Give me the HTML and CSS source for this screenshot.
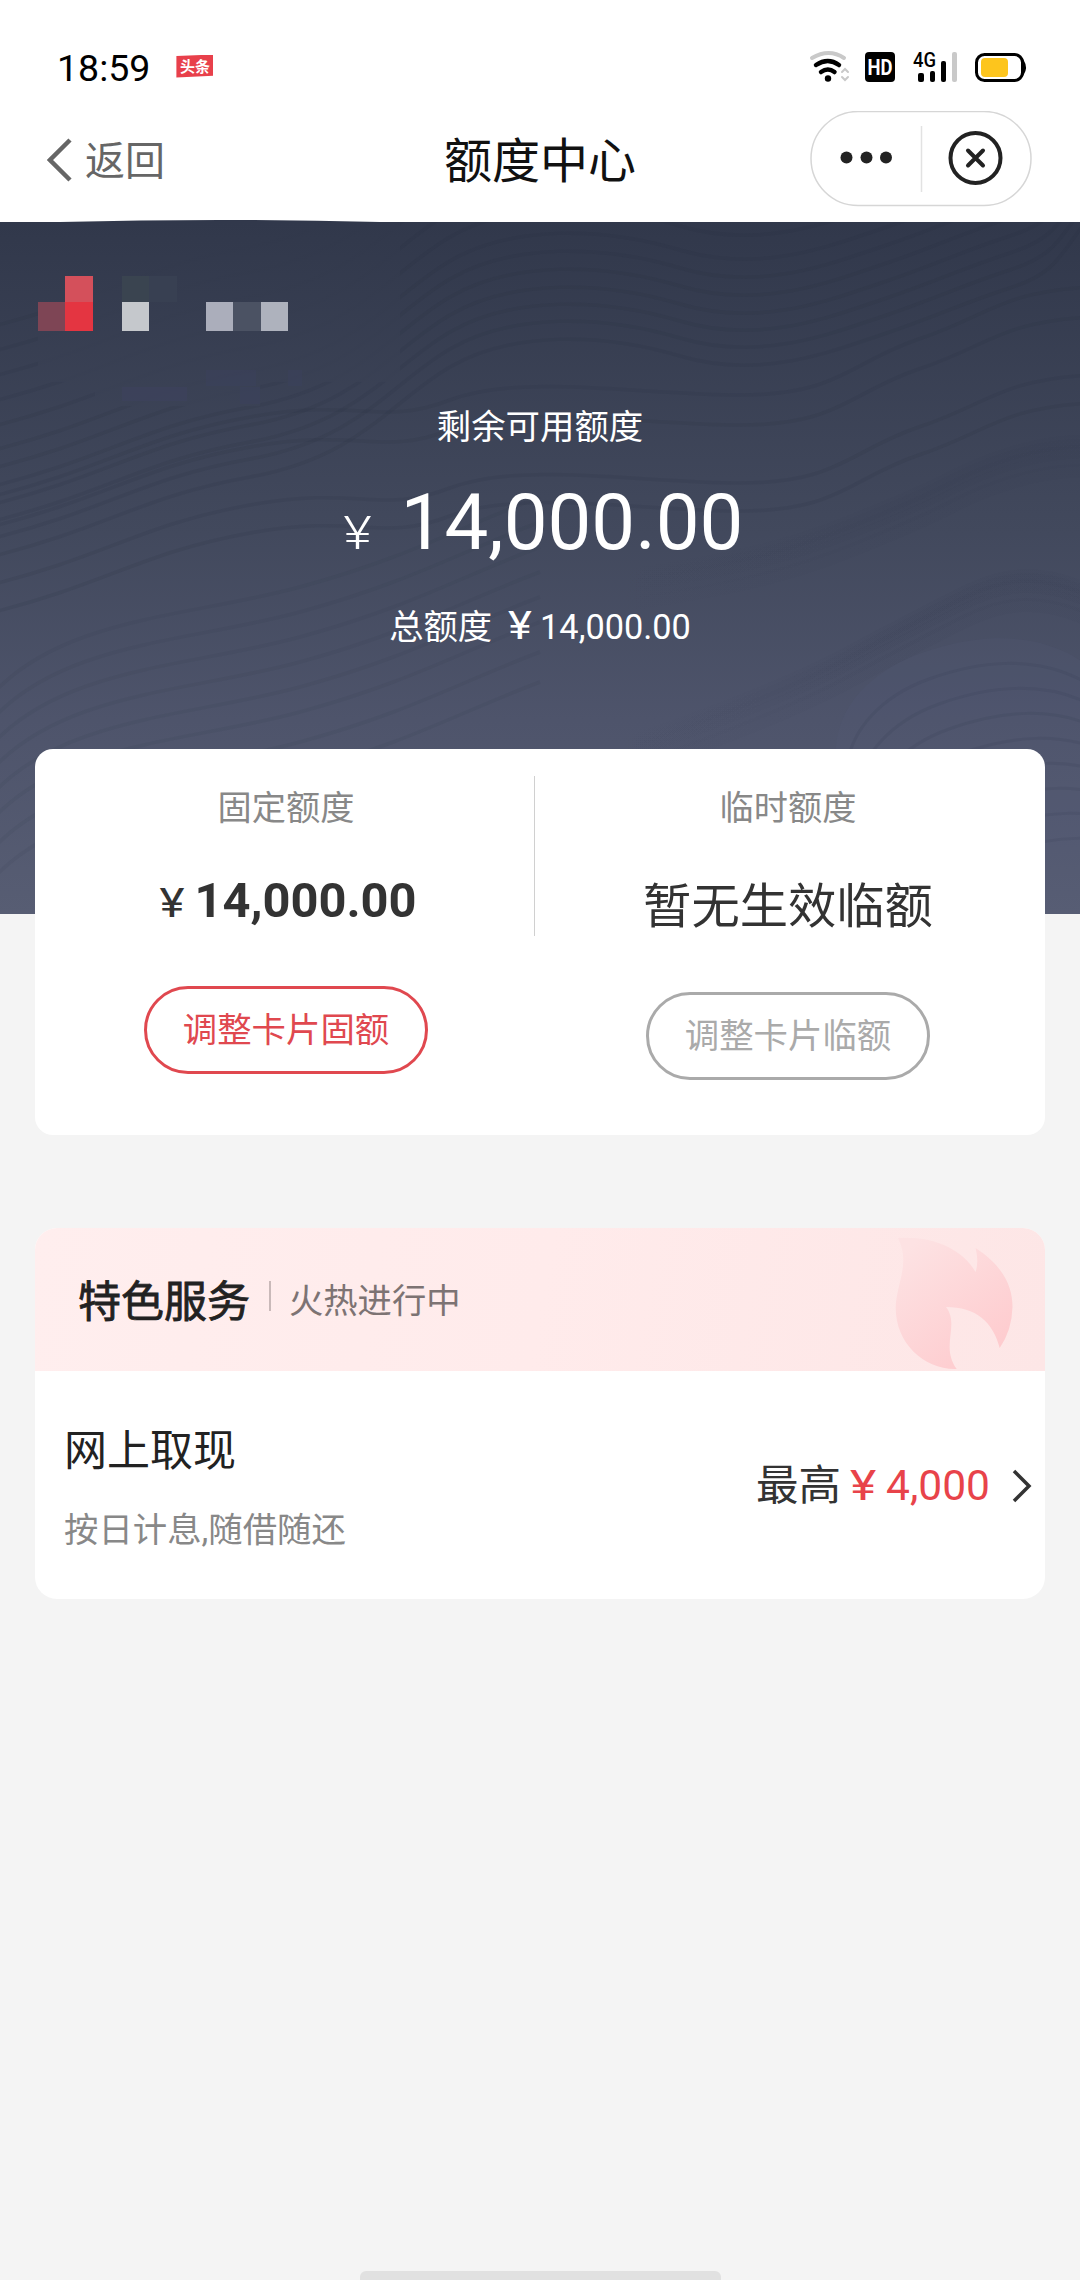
FILE: index.html
```html
<!DOCTYPE html>
<html lang="zh-CN">
<head>
<meta charset="utf-8">
<title>额度中心</title>
<link rel="stylesheet" href="styles.css">
</head>
<body>
<header class="top">
  <div class="status">
    <span class="time">18:59</span>
    <span class="news">头条</span>
    <svg class="status-icons" width="218" height="32" viewBox="810 50 218 32">
      <g fill="none" stroke-linecap="round">
        <path d="M812 57Q829 47 844 57" stroke="#c9c9c9" stroke-width="4"/>
        <path d="M816 64Q828 56 839 64" stroke="#000" stroke-width="4.500"/>
        <path d="M821 71Q828 66 834.500 71" stroke="#000" stroke-width="4.500"/>
        <path d="M842 71l3-3 3 3M842 76l3 3 3-3" stroke="#c9c9c9" stroke-width="2"/>
      </g>
      <circle cx="828" cy="77.500" r="3.200"/>
      <rect x="865" y="51" width="30" height="30" rx="4"/>
      <text x="880" y="74" text-anchor="middle" class="hd" textLength="25" lengthAdjust="spacingAndGlyphs">HD</text>
      <text x="913" y="66" class="net" textLength="23" lengthAdjust="spacingAndGlyphs">4G</text>
      <rect x="918" y="72" width="6" height="9" rx="2"/>
      <rect x="930" y="70" width="5" height="11" rx="2"/>
      <rect x="941" y="60" width="5" height="21" rx="2"/>
      <rect x="952" y="51" width="5" height="30" rx="2" fill="#c9c9c9"/>
      <rect x="976.500" y="53.500" width="46" height="26" rx="8" fill="#fff" stroke="#000" stroke-width="3"/>
      <path d="M1023 60q4 6.500 0 13z" stroke="#000" stroke-width="2"/>
      <rect x="981" y="57" width="27" height="19" rx="4" fill="#fdc51d"/>
    </svg>
  </div>
  <nav class="nav">
    <div class="back">
      <svg width="26" height="44" viewBox="0 0 26 44"><path d="M23 2L3 22l20 20" fill="none" stroke="#666" stroke-width="4.500"/></svg>
      <span>返回</span>
    </div>
    <h1 class="title">额度中心</h1>
    <div class="capsule">
      <svg width="222" height="96" viewBox="810 111 222 96">
        <rect x="811" y="111.500" width="220" height="94" rx="47" fill="#fff" stroke="#d6d6d6" stroke-width="1.500"/>
        <path d="M921.500 126v66" stroke="#e2e2e2" stroke-width="1.500"/>
        <g fill="#222"><circle cx="846.500" cy="157.500" r="6"/><circle cx="866.500" cy="157.500" r="6"/><circle cx="886" cy="157.500" r="6"/></g>
        <circle cx="975.500" cy="158" r="25" fill="none" stroke="#222" stroke-width="4"/>
        <path d="M968 150.500l15 15m0-15l-15 15" stroke="#222" stroke-width="4" stroke-linecap="round"/>
      </svg>
    </div>
  </nav>
</header>

<section class="hero">
  <svg class="waves" width="1080" height="694" viewBox="0 -2 1080 694">
    <defs>
      <linearGradient id="bg" gradientUnits="userSpaceOnUse" x1="0" y1="0" x2="0" y2="692"><stop offset="0" stop-color="#31384b"/><stop offset=".45" stop-color="#42495d"/><stop offset=".72" stop-color="#4e546b"/><stop offset="1" stop-color="#575d73"/></linearGradient>
      <linearGradient id="fade" gradientUnits="userSpaceOnUse" x1="600" y1="0" x2="900" y2="0"><stop offset="0" stop-color="#2c3248" stop-opacity="0"/><stop offset="1" stop-color="#2c3248"/></linearGradient>
      <clipPath id="box"><rect width="1080" height="692"/></clipPath>
      <path id="w" d="M-10 335C110 305 140 275 250 255S390 180 450 145S600 110 680 134S830 130 884 112S960 82 1010 66S1060 30 1090 -5"/>
      <path id="u" d="M-10 335C110 305 140 275 250 255S380 265 450 238S640 233 740 233S850 200 919 177S1000 130 1090 125"/>
      <path id="v" d="M-10 600C60 520 190 520 300 490S460 430 540 400"/>
      <path id="r" d="M836 540C832 480 880 446 919 432S1030 400 1090 445"/>
      <path id="s1" d="M600 350C740 332 800 313 850 293S930 260 953 248S1035 210 1090 213"/>
      <path id="s2" d="M560 538C660 503 720 482 781 456S860 417 884 405S940 375 970 361S1035 338 1090 362"/>
    </defs>
    <path d="M0 0h60Q220-4 380 0h700v692H0z" fill="url(#bg)"/>
    <g clip-path="url(#box)" fill="none">
      <g stroke="url(#fade)" stroke-opacity=".055" stroke-width="14">
        <use href="#s1" y="7"/><use href="#s1" y="11"/><use href="#s1" y="17"/><use href="#s1" y="25"/><use href="#s1" y="36"/>
        <use href="#s2" y="7"/><use href="#s2" y="11"/><use href="#s2" y="17"/><use href="#s2" y="25"/><use href="#s2" y="36"/>
      </g>
      <g stroke="#262d40" stroke-opacity=".13" stroke-width="3.500">
        <use href="#w" y="-230"/><use href="#w" y="-205"/><use href="#w" y="-180"/><use href="#w" y="-155"/><use href="#w" y="-130"/><use href="#w" y="-106"/><use href="#w" y="-88"/><use href="#w" y="-70"/><use href="#w" y="-52"/><use href="#w" y="-35"/><use href="#w" y="-18"/><use href="#w"/>
        <use href="#u" y="-60"/><use href="#u" y="-30"/><use href="#u" y="28"/><use href="#u" y="56"/>
      </g>
      <g stroke="#262d40" stroke-opacity=".08" stroke-width="3.500">
        <use href="#v" y="-125"/><use href="#v" y="-100"/><use href="#v" y="-75"/><use href="#v" y="-50"/><use href="#v" y="-25"/><use href="#v"/><use href="#v" y="30"/><use href="#v" y="60"/>
      </g>
      <path d="M836 692V540C832 480 880 446 919 432S1030 400 1090 445V692z" fill="#565e7a" fill-opacity=".16"/>
      <g stroke="#30374b" stroke-opacity=".13" stroke-width="3">
        <use href="#r" x="10" y="25"/><use href="#r" x="20" y="50"/><use href="#r" x="30" y="75"/><use href="#r" x="40" y="100"/><use href="#r" x="50" y="125"/><use href="#r" x="60" y="150"/><use href="#r" x="70" y="175"/><use href="#r" x="80" y="200"/>
      </g>
      <path d="M38 0h362v160H260v24H95v-24H38z" fill="url(#bg)" fill-opacity=".85"/>
    </g>
  </svg>
  <svg class="user" width="380" height="128" viewBox="38 276 380 128">
    <rect x="122" y="276" width="27" height="26" fill="#3a4450"/><rect x="149" y="276" width="28" height="26" fill="#384052"/>
    <rect x="65" y="276" width="28" height="26" fill="#d4505b"/>
    <rect x="38" y="302" width="27" height="29" fill="#7e4555"/><rect x="65" y="302" width="28" height="29" fill="#e43541"/>
    <rect x="122" y="302" width="27" height="29" fill="#c5c8cc"/>
    <rect x="206" y="302" width="27" height="29" fill="#abaebb"/><rect x="233" y="302" width="28" height="29" fill="#4b5263"/><rect x="261" y="302" width="27" height="29" fill="#aeb2bd"/>
    <g fill="#3d4160"><rect x="206" y="370" width="50" height="16" opacity=".4"/><rect x="122" y="387" width="65" height="14" opacity=".5"/><rect x="240" y="387" width="20" height="17" opacity=".4"/><rect x="288" y="370" width="14" height="16" opacity=".4"/></g>
  </svg>
  <div class="hero-label">剩余可用额度</div>
  <div class="hero-amount"><span class="yen">¥</span><span class="num">14,000.00</span></div>
  <div class="hero-total"><span>总额度</span><span class="yen">¥</span><span class="num">14,000.00</span></div>
</section>

<section class="limits">
  <div class="limit fixed">
    <div class="limit-name">固定额度</div>
    <div class="limit-value"><span class="yen">¥</span><b>14,000.00</b></div>
    <button class="btn">调整卡片固额</button>
  </div>
  <i class="divider"></i>
  <div class="limit temp">
    <div class="limit-name">临时额度</div>
    <div class="limit-value none">暂无生效临额</div>
    <button class="btn off">调整卡片临额</button>
  </div>
</section>

<section class="services">
  <div class="services-head">
    <h2>特色服务</h2><i></i><span>火热进行中</span>
    <svg width="130" height="143" viewBox="890 1228 130 143">
      <defs><linearGradient id="fl" x1="0" y1="0" x2=".7" y2="1"><stop offset=".1" stop-color="#fde2e3"/><stop offset="1" stop-color="#fecbce"/></linearGradient></defs>
      <path d="M898 1238C934 1236 962 1249 975.600 1272Q979 1262 975.600 1248C1003 1266 1012.500 1286 1012.500 1307Q1012 1330 999.700 1348C993 1322 976 1307 946 1307C960 1325 940 1346 956.700 1369C924 1370 895.700 1343 895.700 1308C896 1284 911 1264 898 1238z" fill="url(#fl)"/>
    </svg>
  </div>
  <div class="service">
    <div class="service-text">
      <div class="service-name">网上取现</div>
      <div class="service-desc">按日计息,随借随还</div>
    </div>
    <div class="service-max"><span>最高</span><span class="yen">¥</span><span class="num">4,000</span>
      <svg width="20" height="34" viewBox="0 0 20 34"><path d="M2 2l15 15L2 32" fill="none" stroke="#333" stroke-width="3.500"/></svg>
    </div>
  </div>
</section>
<footer class="home"><i></i></footer>
</body>
</html>
```
FILE: styles.css
```css
* { box-sizing: border-box; margin: 0; padding: 0; }
body {
  width: 1080px;
  height: 2280px;
  display: flex;
  flex-direction: column;
  background: #f4f4f4;
  font-family: Roboto, "Noto Sans CJK SC", sans-serif;
  color: #333;
  overflow: hidden;
}
svg { display: block; flex: none; }
.yen { font-family: Roboto, sans-serif; text-align: center; transform: scaleX(1.16); }
.news { font-family: "Noto Sans CJK SC", sans-serif; }

.top { height: 222px; background: #fff; flex: none; }
.status { height: 100px; padding: 34px 52px 0 57px; display: flex; align-items: center; }
.time { font-size: 37.500px; line-height: 66px; color: #000; padding-top: 1px; }
.news {
  width: 37px; height: 23px; margin-left: 26px; margin-bottom: 2px;
  background: #e8404b; color: #fff;
  font-size: 15px; font-weight: 700; line-height: 21px; text-align: center;
  clip-path: polygon(0 6%, 100% 0, 100% 92%, 0 100%);
}
.status-icons { margin-left: auto; overflow: visible; }
.hd { fill: #fff; font: 700 22px Roboto, sans-serif; }
.net { fill: #000; font: 500 20px Roboto, sans-serif; }
.nav { height: 120px; display: grid; grid-template-columns: 1fr auto 1fr; align-items: center; padding: 0 48px; }
.back { display: flex; align-items: center; gap: 12px; font-size: 40px; line-height: 60px; color: #666; }
.back svg { margin-left: -1px; }
.back span, .title { padding-top: 3px; }
.title { font-size: 48px; font-weight: 400; line-height: 60px; color: #111; }
.capsule { justify-self: end; padding-bottom: 3px; }

.hero { position: relative; height: 692px; flex: none; padding-top: 54px; display: flex; flex-direction: column; align-items: center; color: #fff; }
.hero > * { position: relative; }
.hero > .waves { position: absolute; left: 0; top: -2px; }
.user { align-self: flex-start; margin-left: 38px; }
.hero-label { margin-top: 3px; font-size: 34.4px; line-height: 40px; }
.hero-amount { margin-top: 31px; display: flex; align-items: baseline; line-height: 90px; }
.hero-amount .num { font-size: 78px; }
.hero-amount .yen { width: 41px; font-size: 47px; line-height: 60px; margin-right: 23px; font-weight: 300; }
.hero-total { margin-top: 38px; display: flex; font-size: 34.3px; line-height: 40px; align-items: baseline; }
.hero-total .yen { width: 34px; font-size: 39px; margin: 0 3px 0 11px; }

.limits { position: relative; flex: none; margin: -165px 35px 0; height: 386px; background: #fff; border-radius: 18px; display: grid; grid-template-columns: 499px 1px 510px; }
.limit { display: flex; flex-direction: column; align-items: center; padding-top: 39px; }
.fixed { padding-left: 3px; }
.temp { padding-right: 4px; }
.divider { height: 160px; margin-top: 27px; background: #d0d0d0; }
.limit-name { font-size: 34.2px; line-height: 40px; color: #888; }
.limit-value { margin-top: 43px; height: 60px; display: flex; align-items: baseline; font-size: 48.800px; line-height: 60px; }
.limit-value .yen { width: 34px; font-size: 41px; margin-right: 5px; }
.limit-value.none { margin-top: 49px; font-size: 48.300px; }
.btn { width: 284px; height: 88px; margin-top: 55px; border: 3px solid #e0484f; border-radius: 44px; background: none; font: 34.4px/82px Roboto, "Noto Sans CJK SC", sans-serif; color: #e0484f; }
.btn.off { border-color: #aaa; color: #aaa; }

.services { flex: none; margin: 93px 35px 0; height: 371px; background: #fff; border-radius: 22px; overflow: hidden; }
.services-head { height: 143px; padding: 0 25px 0 43px; display: flex; align-items: center; background: linear-gradient(100deg, #ffeeee, #ffebeb 50%, #fde6e6); }
.services-head h2 { font-size: 43px; font-weight: 400; line-height: 60px; color: #222; -webkit-text-stroke: .8px #222; padding-top: 4px; }
.services-head i { width: 2px; height: 30px; margin: 0 18px 8px 19px; background: #c9b9b9; }
.services-head span { font-size: 34.3px; line-height: 50px; color: #7d7373; padding-top: 3px; }
.services-head svg { margin-left: auto; }
.service { height: 228px; padding: 0 13px 0 29px; display: flex; justify-content: space-between; align-items: center; }
.service-text { padding-top: 6px; }
.service-name { font-size: 43px; line-height: 60px; color: #222; }
.service-desc { margin-top: 24px; font-size: 34.400px; line-height: 50px; color: #888; }
.service-max { display: flex; align-items: baseline; padding-top: 1px; font-size: 42.500px; line-height: 60px; }
.service-max .yen, .service-max .num { color: #e8434a; }
.service-max .yen { width: 38px; font-size: 43px; margin: 0 4px 0 3px; }
.service-max svg { margin-left: 22px; align-self: center; }

.home { margin-top: auto; height: 9px; display: flex; justify-content: center; }
.home i { width: 361px; height: 14px; border-radius: 6px; background: #e1e1e1; }
```
